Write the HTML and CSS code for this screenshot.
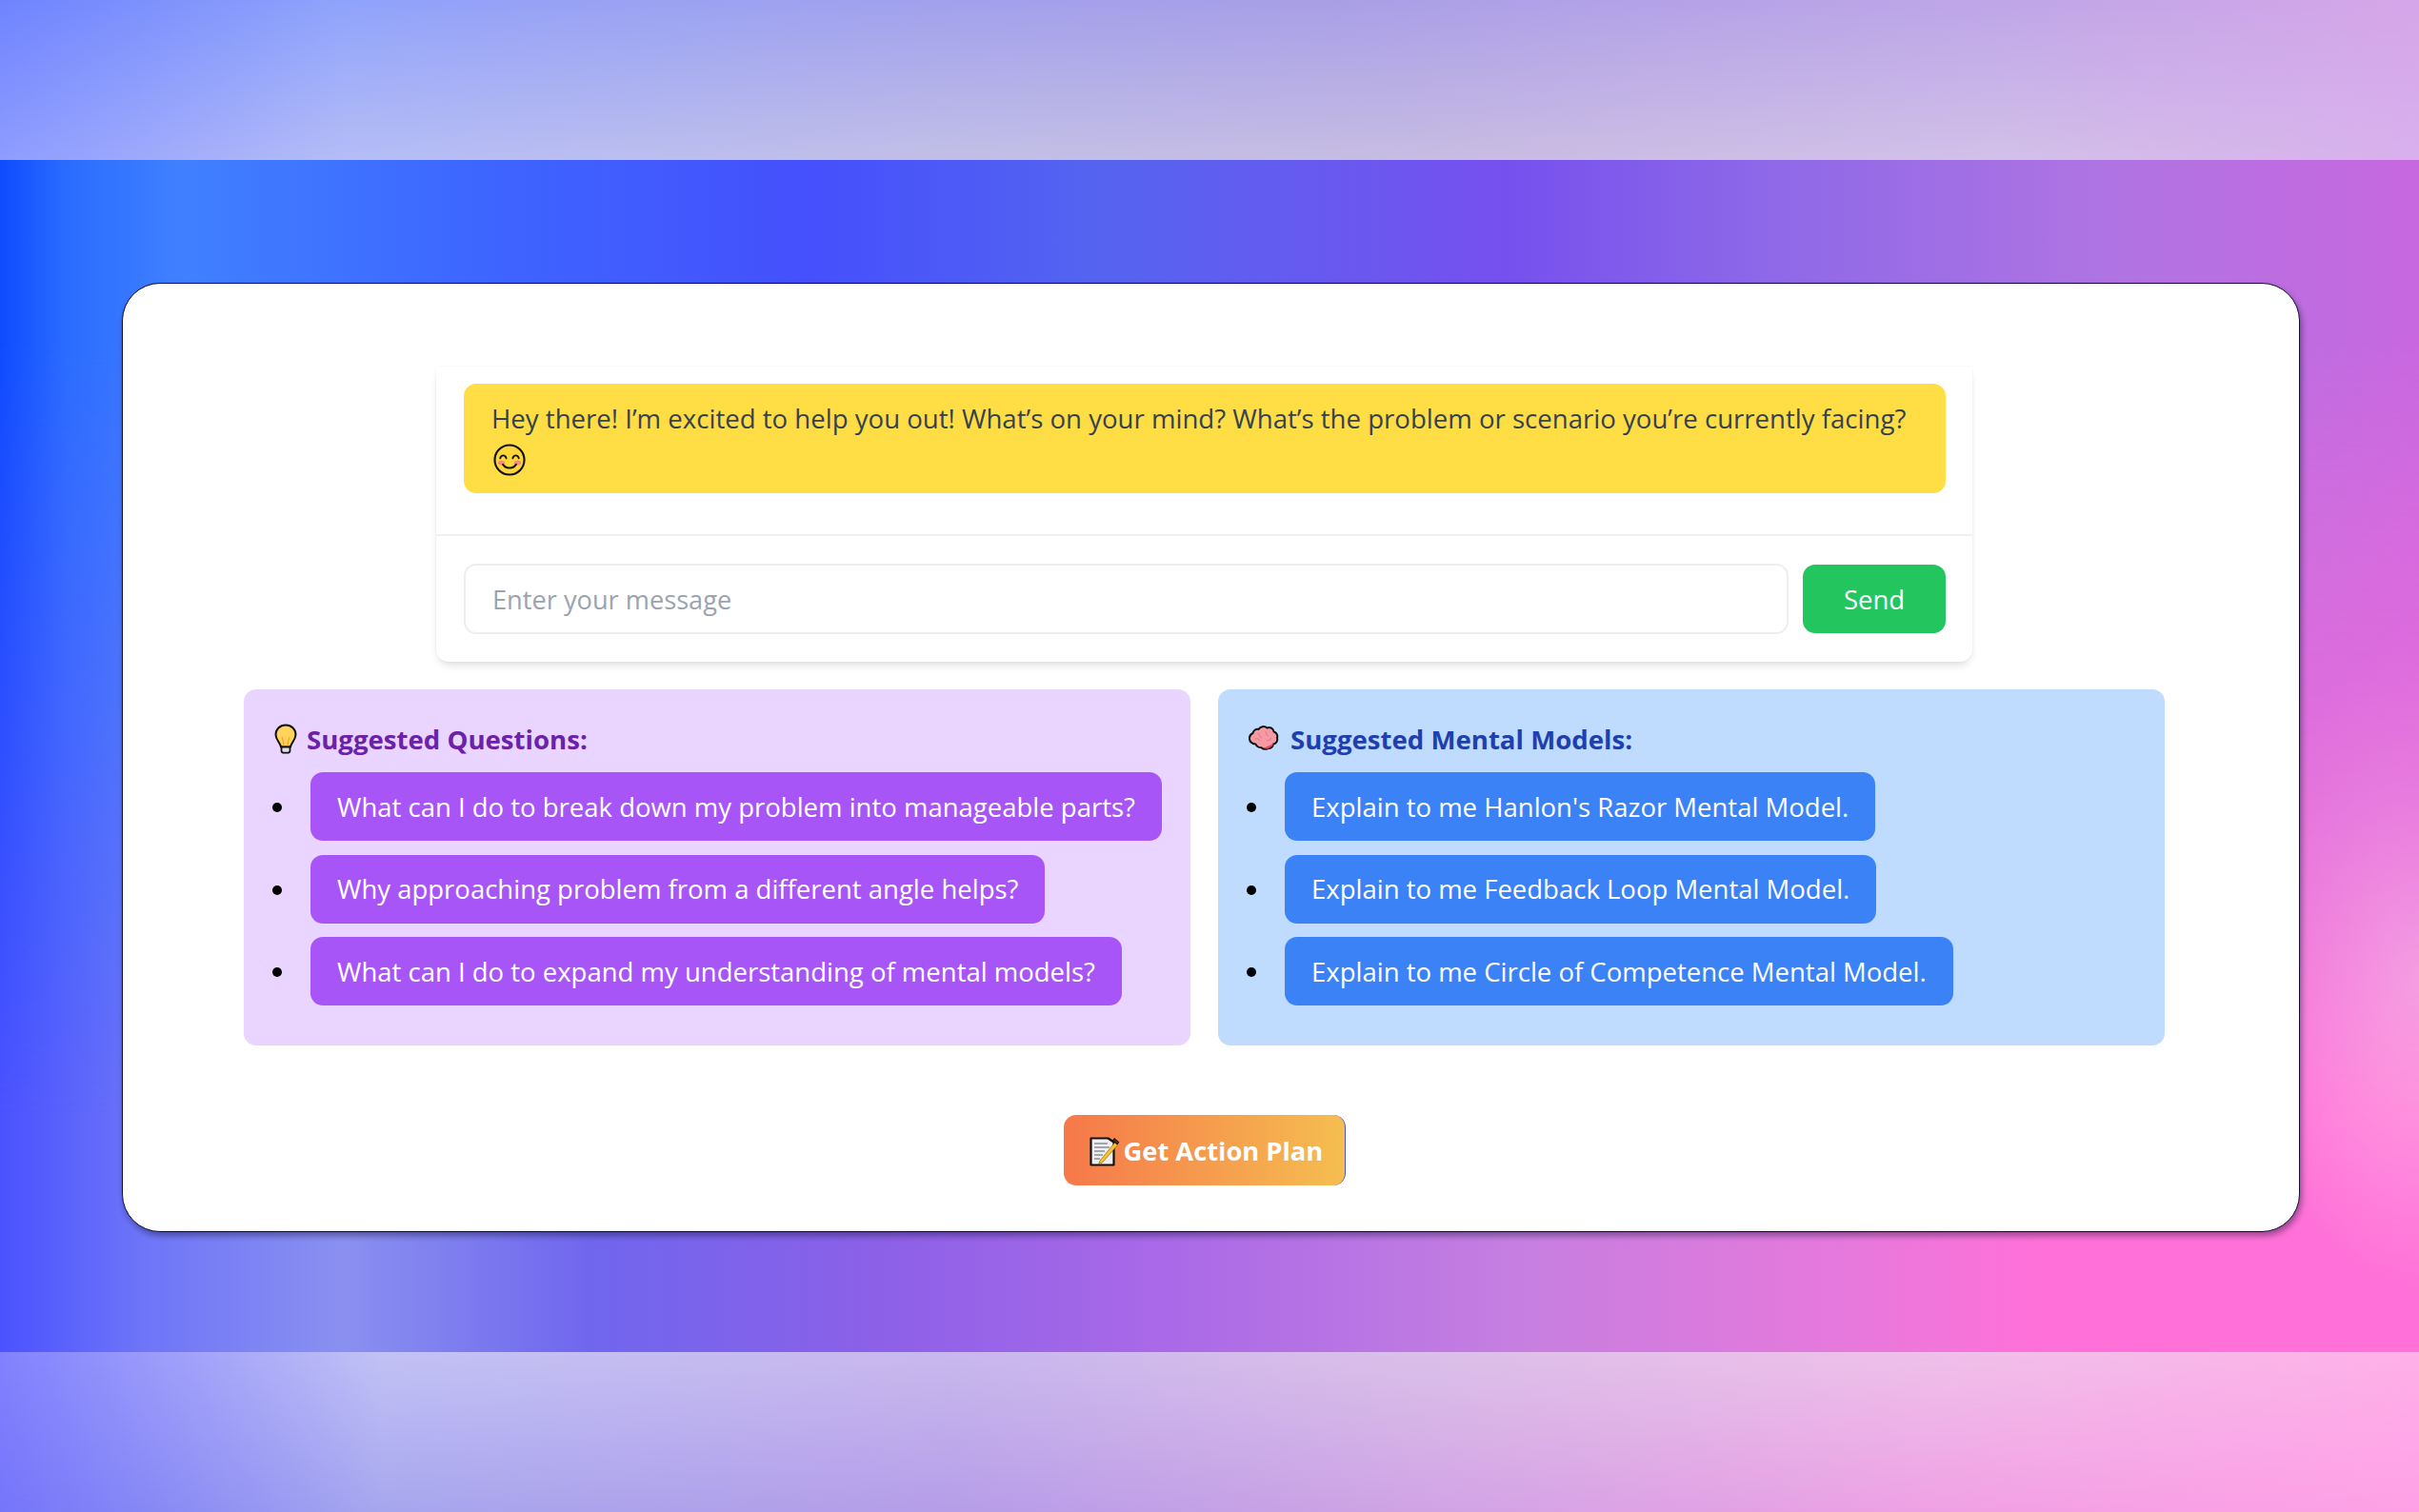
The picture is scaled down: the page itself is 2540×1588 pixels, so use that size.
FILE: index.html
```html
<!DOCTYPE html>
<html lang="en">
<head>
<meta charset="utf-8">
<title>Mental Models Chat</title>
<link rel="stylesheet" href="styles.css">
</head>
<body>
<div class="band band-top"></div>
<main class="stage">
  <section class="card">
    <div class="chat">
      <div class="messages">
        <p class="bubble">Hey there! I’m excited to help you out! What’s on your mind? What’s the problem or scenario you’re currently facing?
          <svg class="emoji emoji-smile" viewBox="0 0 32 32" aria-hidden="true">
            <circle cx="16" cy="16" r="14.6" fill="#fdd63a" stroke="#111" stroke-width="2"/>
            <ellipse cx="8" cy="19" rx="3.4" ry="2.2" fill="#f58b7c"/>
            <ellipse cx="24" cy="19" rx="3.4" ry="2.2" fill="#f58b7c"/>
            <path d="M6.8 14.4c.8-3.6 5.2-3.6 6 0M19.2 14.4c.8-3.6 5.2-3.6 6 0" fill="none" stroke="#111" stroke-width="1.7" stroke-linecap="round"/>
            <path d="M9.5 20.5c2.4 4.6 10.6 4.6 13 0" fill="none" stroke="#111" stroke-width="1.9" stroke-linecap="round"/>
          </svg>
        </p>
      </div>
      <form class="composer">
        <input class="composer-input" type="text" placeholder="Enter your message">
        <button class="send" type="button">Send</button>
      </form>
    </div>
    <div class="panels">
      <section class="panel panel-purple">
        <h2 class="panel-title">
          <svg class="emoji emoji-bulb" viewBox="0 0 24 32" aria-hidden="true">
            <path d="M12 1.5C5.8 1.5 1.5 6 1.5 11.4c0 5.6 4.6 8.2 5.6 13.1h9.8c1-4.9 5.6-7.5 5.6-13.1C22.500 6 18.2 1.500 12 1.500z" fill="#ffd35c" stroke="#111" stroke-width="2"/>
            <path d="M8 14c2 6 2 7 2.200 10M16 14c-2 6-2 7-2.200 10" fill="none" stroke="#f5a623" stroke-width="1.300"/>
            <path d="M7.500 24.500h9v4.200c0 1.200-1.500 2-2.500 2h-4c-1 0-2.500-.8-2.500-2z" fill="#dfe0e4" stroke="#111" stroke-width="1.800"/>
          </svg>
          <span>Suggested Questions:</span>
        </h2>
        <ul class="suggestions">
          <li><button class="chip chip-purple" type="button">What can I do to break down my problem into manageable parts?</button></li>
          <li><button class="chip chip-purple" type="button">Why approaching problem from a different angle helps?</button></li>
          <li><button class="chip chip-purple" type="button">What can I do to expand my understanding of mental models?</button></li>
        </ul>
      </section>
      <section class="panel panel-blue">
        <h2 class="panel-title panel-title-wide">
          <svg class="emoji emoji-brain" viewBox="0 0 32 27" aria-hidden="true">
            <path d="M4.500 8a5 5 0 0 1 6-4 6 6 0 0 1 9-1.500 5 5 0 0 1 7 4 5 5 0 0 1 3.500 6.500 5 5 0 0 1-4 6.500 5 5 0 0 1-5.500 4.500c-2 1-5 1-7-.8-3 0-5.200-1.700-6-3.700-4 0-7-3-6.500-7A6 6 0 0 1 4.500 8z" fill="#f59aa5" stroke="#111" stroke-width="2" stroke-linejoin="round"/>
            <path d="M15.500 23.500c2.500 1.500 5.500 1.300 7-.5 2-.5 3.500-2.500 3.500-4.500-3 2.500-7 4-10.500 5z" fill="#ee3e57"/>
            <path d="M10 8c2 2 1 4 4 5M18 6c0 3 1 4 3 5M7 14c2-1 4 0 5 2M24 13c-1 2-3 3-5 3" fill="none" stroke="#e87b8b" stroke-width="1.200"/>
          </svg>
          <span>Suggested Mental Models:</span>
        </h2>
        <ul class="suggestions">
          <li><button class="chip chip-blue" type="button">Explain to me Hanlon's Razor Mental Model.</button></li>
          <li><button class="chip chip-blue" type="button">Explain to me Feedback Loop Mental Model.</button></li>
          <li><button class="chip chip-blue" type="button">Explain to me Circle of Competence Mental Model.</button></li>
        </ul>
      </section>
    </div>
    <div class="actions">
      <button class="action" type="button">
        <svg class="emoji emoji-memo" viewBox="0 0 32 33" aria-hidden="true">
          <path d="M1.500 3.500h18l6 4V31.500H1.500z" fill="#eeeef0" stroke="#111" stroke-width="2.200" stroke-linejoin="round"/>
          <path d="M5 9h14M5 13h16M5 17h11M5 21h9M5 25h6" stroke="#8d8f96" stroke-width="1.500"/>
          <path d="M11 27l-1.500 3.500 4-1.500L30 10l-3-2.500z" fill="#fbc02d" stroke="#7a5500" stroke-width=".6"/>
          <path d="M26 3.500l4.800 4-1.800 2.500-4.500-4z" fill="#33302c" stroke="#111"/>
        </svg>
        <span>Get Action Plan</span>
      </button>
    </div>
  </section>
</main>
<div class="band band-bottom"></div>
</body>
</html>
```
FILE: styles.css
```css
* { box-sizing: border-box; }
html, body { margin: 0; height: 100%; }
body {
  width: 2540px;
  height: 1588px;
  overflow: hidden;
  display: flex;
  flex-direction: column;
  font-family: "Open Sans", "Noto Sans", "Liberation Sans", sans-serif;
  font-size: 27.5px;
  background: #fff;
}

/* pale blurred strips above and below the stage */
.band { height: 168px; flex: none; position: relative; }
.band::before { content: ""; position: absolute; inset: 0; }
.band-top {
  background: linear-gradient(90deg, #6f84ff 0, #90a3fb 360px, #9ea2f0 800px, #a99fe7 1400px, #bfa6e8 2100px, #d6a6ea 2540px);
}
.band-top::before {
  background: linear-gradient(90deg, #8e9cff 0, #b5bdf6 360px, #c2bfe6 1000px, #c7bce2 1500px, #d2c0e8 2100px, #d8b0ec 2540px);
  -webkit-mask-image: linear-gradient(180deg, transparent, #000);
  mask-image: linear-gradient(180deg, transparent, #000);
}
.band-bottom {
  background: linear-gradient(90deg, #8282ff 0, #c2c2f6 400px, #c9b8ee 1000px, #dcc0e9 1500px, #f0c0ea 2050px, #ffb0e8 2540px);
}
.band-bottom::before {
  background: linear-gradient(90deg, #7475fa 0, #a6a6ee 400px, #b69de8 1000px, #d0a3e4 1500px, #f2a0e4 2100px, #ffa0e6 2540px);
  -webkit-mask-image: linear-gradient(180deg, transparent, #000);
  mask-image: linear-gradient(180deg, transparent, #000);
}

/* saturated stage */
.stage {
  flex: 1;
  display: flex;
  position: relative;
  padding: 126px 125px 126px 128px;
  border-top: 3px solid rgba(255, 255, 255, .1);
  background:
    radial-gradient(190px 340px at 2540px 850px, rgba(255, 175, 228, .9), transparent),
    linear-gradient(90deg, #4a52ff 0, #6e75f8 150px, #8a90f0 360px, #7066ee 620px, #8a60e8 900px, #a868e8 1200px, #c67fe0 1600px, #e878dc 1950px, #ff70d8 2150px, #ff70d8 2540px);
}
.stage::before {
  content: "";
  position: absolute;
  inset: -3px 0 0;
  background: linear-gradient(90deg, #0f4bff 0, #2b6cff 70px, #4080ff 190px, #3d66ff 500px, #4550fc 850px, #5464f0 1150px, #7650ee 1580px, #8d68e8 1850px, #b074e2 2220px, #c868e0 2540px);
  -webkit-mask-image: linear-gradient(180deg, #000 15%, transparent 80%);
  mask-image: linear-gradient(180deg, #000 15%, transparent 80%);
}

.card {
  position: relative;
  flex: 1;
  display: flex;
  flex-direction: column;
  align-items: center;
  padding: 87px 141px 47px 127px;
  background: #fff;
  border: 1.5px solid #0e0e30;
  border-radius: 40px;
  box-shadow: 2px 4px 6px rgba(10, 10, 40, .4);
}

/* chat box */
.chat {
  width: 1613px;
  background: #fff;
  border-radius: 0 0 13px 13px;
  box-shadow: 0 6px 10px -3px rgba(0, 0, 0, .14), 0 0 3px rgba(0, 0, 0, .05);
}
.messages {
  padding: 18px 28px 43px 29px;
  border-bottom: 2px solid #f0f1f3;
}
.bubble {
  margin: 0;
  height: 115px;
  padding: 16px 29px 0;
  font-size: 27.58px;
  color: #374151;
  background: #fede44;
  border-radius: 13px;
  line-height: 42px;
}
.emoji { display: inline-block; flex: none; }
.emoji-smile { width: 34px; height: 34px; vertical-align: -8px; margin-left: 2px; }
.composer {
  display: flex;
  align-items: center;
  gap: 15px;
  padding: 29px 28px 29px 29px;
}
.composer-input {
  flex: 1;
  min-width: 0;
  height: 74px;
  padding: 0 28px;
  font: inherit;
  font-size: 27.2px;
  color: #374151;
  background: #fff;
  border: 2px solid #eceef1;
  border-radius: 13px;
  outline: none;
}
.composer-input::placeholder { color: #9ca3af; opacity: 1; }
.send {
  width: 150px;
  height: 72px;
  font: inherit;
  color: #fff;
  background: #22c55e;
  border: 0;
  border-radius: 13px;
}

/* suggestion panels */
.panels {
  align-self: stretch;
  display: grid;
  grid-template-columns: minmax(0, 1fr) minmax(0, 1fr);
  gap: 29px;
  margin-top: 29px;
}
.panel {
  height: 374px;
  padding: 29px 30px;
  border-radius: 13px;
}
.panel-purple { background: #e9d5ff; color: #6b21a8; }
.panel-blue { background: #bfdbfe; color: #1e40af; }
.panel-title {
  display: flex;
  align-items: center;
  gap: 10px;
  height: 45px;
  margin: 0 0 13px;
  font-size: 27.6px;
  font-weight: 700;
}
.panel-title-wide { gap: 12px; }
.emoji-bulb { width: 24px; height: 32px; margin-left: 2px; }
.emoji-brain { width: 32px; height: 27px; margin-left: 2px; }
.suggestions {
  margin: 0;
  padding: 0 0 0 40px;
  list-style: none;
}
.suggestions li { position: relative; height: 72px; margin-bottom: 14.500px; }
.suggestions li::before {
  content: "";
  position: absolute;
  left: -40px;
  top: 32px;
  width: 10px;
  height: 10px;
  background: #000;
  border-radius: 50%;
}
.chip {
  height: 72px;
  padding: 0 28px;
  font: inherit;
  color: #fff;
  border: 0;
  border-radius: 13px;
  white-space: nowrap;
}
.chip-purple { background: #a855f7; }
.chip-blue { background: #3b82f6; }

/* action */
.actions { margin-top: 73px; display: flex; justify-content: center; }
.action {
  display: flex;
  align-items: center;
  gap: 4px;
  width: 296px;
  height: 74px;
  padding: 0 0 0 27px;
  font: inherit;
  font-size: 27.3px;
  font-weight: 700;
  color: #fff;
  background: linear-gradient(90deg, #f6784a, #f5be50);
  border: 0;
  border-right: 1.500px solid #4a55c8;
  border-radius: 13px;
}
.emoji-memo { width: 32px; height: 33px; }
```
